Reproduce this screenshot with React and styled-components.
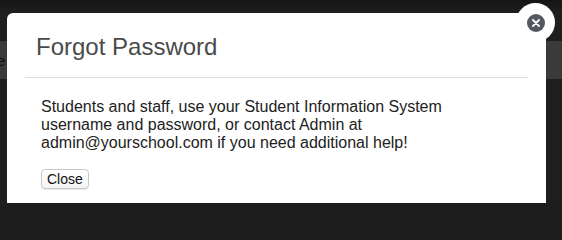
import React from "react";
import styled, { createGlobalStyle } from "styled-components";

const Global = createGlobalStyle`
  html, body { margin: 0; padding: 0; background: #1d1d1d; overflow: hidden; }
  body { font-family: "Liberation Sans", Arial, sans-serif; }
`;

const Page = styled.div`
  position: relative;
  width: 562px;
  height: 203px;
  overflow: hidden;
  background: #1e1e1e;
  display: flex;
  flex-direction: column;
`;

const TopStrip = styled.div`
  height: 41px;
  background: linear-gradient(#151515, #1f1f1f 30%, #1d1d1d);
`;

const NavBand = styled.div`
  height: 38px;
  background: #3a3a3a;
  display: flex;
  align-items: center;
  color: #111;
  font-size: 15px;
  white-space: nowrap;
  overflow: hidden;
`;

const NavText = styled.span`
  margin-left: -3px;
`;

const Modal = styled.div`
  position: absolute;
  left: 7px;
  top: 13px;
  width: 539px;
  height: 190px;
  background: #fff;
  border-radius: 6px 6px 0 0;
  display: flex;
  flex-direction: column;
`;

const Header = styled.div`
  margin: 0 18px;
  padding: 20px 11px 16px;
  border-bottom: 1px solid #dcdcdc;
`;

const Title = styled.h3`
  margin: 0;
  font-size: 24px;
  font-weight: normal;
  line-height: 28px;
  color: #4a4a4a;
`;

const Body = styled.div`
  padding: 20px 34px;
  display: flex;
  flex-direction: column;
  align-items: flex-start;
  gap: 17px;
`;

const Text = styled.p`
  margin: 0;
  font-size: 16px;
  line-height: 18px;
  color: #222;
  width: 440px;
`;

const Button = styled.button`
  font-family: "Liberation Sans", Arial, sans-serif;
  font-size: 14px;
  line-height: 16px;
  color: #111;
  height: 20px;
  padding: 0 5px;
  background: linear-gradient(#fff, #f4f4f4);
  border: 1px solid #c8c8c8;
  border-radius: 4px;
  box-shadow: 0 1px 1px rgba(0, 0, 0, 0.08);
`;

const CloseRing = styled.div`
  position: absolute;
  left: 516px;
  top: 3px;
  width: 39px;
  height: 39px;
  border-radius: 50%;
  background: #fff;
  display: flex;
  align-items: center;
  justify-content: center;
`;

const CloseDot = styled.div`
  width: 18px;
  height: 18px;
  border-radius: 50%;
  background: #55595f;
  display: flex;
  align-items: center;
  justify-content: center;
`;

export default function App() {
  return (
    <>
      <Global />
      <Page>
        <TopStrip />
        <NavBand>
          <NavText>e</NavText>
        </NavBand>
        <Modal>
          <Header>
            <Title>Forgot Password</Title>
          </Header>
          <Body>
            <Text>
              Students and staff, use your Student Information System
              <br />
              username and password, or contact Admin at
              <br />
              admin@yourschool.com if you need additional help!
            </Text>
            <Button>Close</Button>
          </Body>
        </Modal>
        <CloseRing>
          <CloseDot>
            <svg width="8" height="8" viewBox="0 0 8 8">
              <path
                d="M1 1L7 7M7 1L1 7"
                stroke="#fff"
                strokeWidth="1.8"
                strokeLinecap="round"
              />
            </svg>
          </CloseDot>
        </CloseRing>
      </Page>
    </>
  );
}
